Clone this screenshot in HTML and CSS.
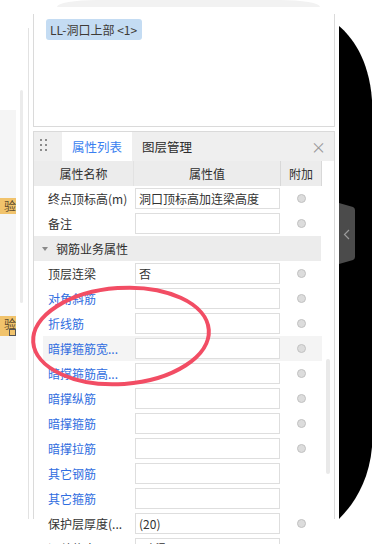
FILE: index.html
```html
<!DOCTYPE html>
<html lang="zh-CN">
<head>
    <meta charset="UTF-8">
    <meta name="viewport" content="width=device-width, initial-scale=1.0">
    <title>属性列表</title>
    <link rel="stylesheet" href="styles.css">
</head>
<body>
    <div class="top-arc"></div>

    <div class="main">
        <div class="side">
            <div class="side-list">
                <div class="badge badge-one">验</div>
                <div class="badge badge-two">验<span class="lock"></span></div>
            </div>
            <div class="side-track"></div>
        </div>

        <div class="panel">
            <div class="preview">
                <span class="tag">LL-洞口上部 &lt;1&gt;</span>
            </div>

            <div class="props">
                <div class="tabs">
                    <div class="grip">
                        <i></i><i></i><i></i><i></i><i></i><i></i>
                    </div>
                    <div class="tab active">属性列表</div>
                    <div class="tab">图层管理</div>
                    <div class="close">×</div>
                </div>

                <div class="props-body">
                    <div class="grid">
                        <div class="row head">
                            <div class="cell">属性名称</div>
                            <div class="cell">属性值</div>
                            <div class="cell">附加</div>
                        </div>

                        <div class="row">
                            <div class="name">终点顶标高(m)</div>
                            <div class="value"><div class="box">洞口顶标高加连梁高度</div></div>
                            <div class="extra"><span class="dot"></span></div>
                        </div>
                        <div class="row">
                            <div class="name">备注</div>
                            <div class="value"><div class="box"></div></div>
                            <div class="extra"><span class="dot"></span></div>
                        </div>
                        <div class="row group">
                            <span class="caret"></span>钢筋业务属性
                        </div>
                        <div class="row">
                            <div class="name">顶层连梁</div>
                            <div class="value"><div class="box">否</div></div>
                            <div class="extra"><span class="dot"></span></div>
                        </div>
                        <div class="row">
                            <div class="name link">对角斜筋</div>
                            <div class="value"><div class="box"></div></div>
                            <div class="extra"><span class="dot"></span></div>
                        </div>
                        <div class="row">
                            <div class="name link">折线筋</div>
                            <div class="value"><div class="box"></div></div>
                            <div class="extra"><span class="dot"></span></div>
                        </div>
                        <div class="row hl">
                            <div class="name link">暗撑箍筋宽...</div>
                            <div class="value"><div class="box"></div></div>
                            <div class="extra"><span class="dot"></span></div>
                        </div>
                        <div class="row">
                            <div class="name link">暗撑箍筋高...</div>
                            <div class="value"><div class="box"></div></div>
                            <div class="extra"><span class="dot"></span></div>
                        </div>
                        <div class="row">
                            <div class="name link">暗撑纵筋</div>
                            <div class="value"><div class="box"></div></div>
                            <div class="extra"><span class="dot"></span></div>
                        </div>
                        <div class="row">
                            <div class="name link">暗撑箍筋</div>
                            <div class="value"><div class="box"></div></div>
                            <div class="extra"><span class="dot"></span></div>
                        </div>
                        <div class="row">
                            <div class="name link">暗撑拉筋</div>
                            <div class="value"><div class="box"></div></div>
                            <div class="extra"><span class="dot"></span></div>
                        </div>
                        <div class="row">
                            <div class="name link">其它钢筋</div>
                            <div class="value"><div class="box"></div></div>
                            <div class="extra"></div>
                        </div>
                        <div class="row">
                            <div class="name link">其它箍筋</div>
                            <div class="value"><div class="box"></div></div>
                            <div class="extra"></div>
                        </div>
                        <div class="row">
                            <div class="name">保护层厚度(...</div>
                            <div class="value"><div class="box">(20)</div></div>
                            <div class="extra"><span class="dot"></span></div>
                        </div>
                        <div class="row">
                            <div class="name">汇总信息</div>
                            <div class="value"><div class="box">(暗梁)</div></div>
                            <div class="extra"></div>
                        </div>
                    </div>
                    <div class="scroll-col">
                        <div class="scroll-thumb"></div>
                    </div>
                </div>
            </div>
        </div>
    </div>

    <!-- screen edge on the right, with the collapse handle -->
    <svg class="bezel" width="33" height="544" viewBox="0 0 33 544">
        <path d="M0 26 C12 36 30 58 33 100 L33 447 C30 482 14 505 0 519 Z" fill="#000"/>
        <path d="M0 203 L14 207 Q16 208 16 210 L16 257 Q16 259 14 260 L0 264 Z" fill="#4b4b4b"/>
        <path d="M10 230 L5.5 234.5 L10 239" fill="none" stroke="#9b9b9b" stroke-width="1.2"/>
    </svg>

    <!-- hand-drawn annotation -->
    <svg class="mark" width="372" height="544" viewBox="0 0 372 544">
        <ellipse cx="121" cy="336" rx="88" ry="48" transform="rotate(-4 121 336)"
                 fill="none" stroke="#f24d64" stroke-width="4"/>
    </svg>
</body>
</html>
```

FILE: styles.css
```css
:root {
    --line: #dadada;
    --head: #ececec;
    --text: #333333;
    --link: #2f6de0;
    --font: 'Noto Sans CJK SC', 'Noto Sans', sans-serif;
}

body {
    margin: 0;
    width: 372px;
    height: 544px;
    overflow: hidden;
    position: relative;
    background: #ffffff;
    color: var(--text);
    font-family: var(--font);
    font-size: 12px;
}

.top-arc {
    height: 7px;
    margin: 0 52px 0 57px;
    background: #f2f2f2;
    border-radius: 40px 40px 0 0 / 7px 7px 0 0;
}

.main {
    display: flex;
    height: 505px;
    margin-top: 7px;
}

/* left strip */
.side {
    width: 28px;
    margin: 14px 4px 0 0;
    border-right: 1px solid #e2e2e2;
    display: flex;
    align-items: flex-start;
}

.side-list {
    width: 16px;
    height: 250px;
    margin-top: 82px;
    background: #f5f5f5;
    overflow: hidden;
}

.side-track {
    width: 3px;
    height: 213px;
    margin: 62px 0 0 4px;
    background: #ebebeb;
    border-radius: 2px;
}

.badge {
    height: 16px;
    background: #f1c36c;
    color: #5b4a2c;
    font-size: 12px;
    line-height: 16px;
    text-align: right;
    white-space: nowrap;
}

.badge-one {
    margin-top: 88px;
}

.badge-two {
    margin-top: 102px;
    height: 20px;
    position: relative;
}

.lock {
    position: absolute;
    left: 9px;
    top: 13px;
    width: 5px;
    height: 5px;
    border: 1px solid #555;
}

/* main panel */
.panel {
    width: 302px;
    display: flex;
    flex-direction: column;
}

.preview {
    flex-shrink: 0;
    height: 107px;
    border: 1px solid var(--line);
    border-top: none;
    padding: 5px 0 0 12px;
}

.tag {
    display: inline-block;
    height: 21px;
    padding: 0 5px 0 4px;
    background: #c4dcf3;
    border-radius: 3px;
    color: #3e3a36;
    line-height: 21px;
}

.props {
    flex: 1;
    min-height: 0;
    margin-top: 4px;
    border: 1px solid var(--line);
    border-bottom: none;
}

.tabs {
    height: 29px;
    background: #efefef;
    display: flex;
    align-items: stretch;
}

.grip {
    width: 12px;
    margin: 7px 10px 0 6px;
    display: grid;
    grid-template-columns: 2px 2px;
    grid-auto-rows: 2px;
    column-gap: 3px;
    row-gap: 3px;
}

.grip i {
    background: #8c8c8c;
}

.tab {
    padding: 0 10px;
    line-height: 30px;
    color: #2b2b2b;
    font-size: 12.5px;
}

.tab.active {
    background: #ffffff;
    color: #3a7ff0;
}

.close {
    margin-left: auto;
    margin-right: 8px;
    line-height: 29px;
    font-size: 15px;
    color: #9a9a9a;
}

.props-body {
    display: flex;
}

.grid {
    width: 288px;
}

.scroll-col {
    width: 12px;
}

.scroll-thumb {
    width: 4px;
    height: 115px;
    margin: 198px 0 0 4px;
    background: #e9e9e9;
    border-radius: 2px;
}

.row {
    display: grid;
    grid-template-columns: 100px 147px 41px;
    height: 25px;
}

.row.head .cell {
    background: var(--head);
    border-right: 1px solid #d8d8d8;
    text-align: center;
    line-height: 25px;
    color: #2e2e2e;
}

.row.head .cell:first-child {
    border-right-color: #e2e2e2;
}

.name {
    margin-left: 9px;
    padding-left: 5px;
    line-height: 25px;
    white-space: nowrap;
    overflow: hidden;
}

.name.link {
    color: var(--link);
}

.value {
    padding: 2px 1px;
}

.box {
    height: 19px;
    border: 1px solid #dedede;
    background: #ffffff;
    padding-left: 3px;
    line-height: 19px;
    white-space: nowrap;
    overflow: hidden;
}

.extra {
    display: flex;
    align-items: center;
    justify-content: center;
}

.dot {
    width: 7px;
    height: 7px;
    border-radius: 50%;
    background: #dcdcdc;
    border: 1px solid #c2c2c2;
}

.row.group {
    display: flex;
    align-items: center;
    background: var(--head);
    width: 287px;
    color: #2e2e2e;
}

.caret {
    width: 0;
    height: 0;
    margin: 0 8px 0 8px;
    border-left: 3px solid transparent;
    border-right: 3px solid transparent;
    border-top: 4px solid #8a8a8a;
}

.row.hl .name,
.row.hl .extra,
.row.hl .value {
    background: #f4f4f4;
}

/* overlays */
.bezel {
    position: absolute;
    top: 0;
    right: 0;
}

.mark {
    position: absolute;
    top: 0;
    left: 0;
    pointer-events: none;
}
```
